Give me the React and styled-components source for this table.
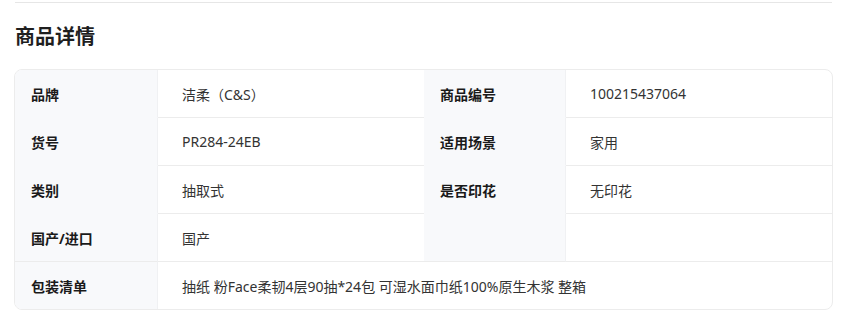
import React from 'react';
import styled, { createGlobalStyle } from 'styled-components';

const GlobalStyle = createGlobalStyle`
  body {
    margin: 0;
    background: #fff;
    font-family: "Noto Sans", "Noto Sans CJK SC", sans-serif;
  }
`;

const Page = styled.div`
  padding: 0 13px 0 15px;
  width: 817px;
`;

const Divider = styled.div`
  margin-top: 2px;
  height: 1px;
  background: #e6e6e6;
`;

const Title = styled.h2`
  margin: 20px 0 18px;
  font-size: 20px;
  line-height: 28px;
  font-weight: 700;
  color: #1f1f1f;
`;

const Table = styled.div`
  display: grid;
  grid-template-columns: 143px 266px 142px 266px;
  border: 1px solid #ececec;
  border-radius: 8px;
  overflow: hidden;
  margin-left: -1px;
  width: 817px;
`;

const Label = styled.div`
  height: 48px;
  display: flex;
  align-items: center;
  padding-left: 16px;
  box-sizing: border-box;
  background: #f8f9fb;
  border-right: 1px solid #f0f1f3;
  border-bottom: 1px solid ${(p) => (p.$edge ? '#ececec' : '#f8f9fb')};
  font-size: 14px;
  font-weight: 700;
  color: #1a1a1a;
  ${(p) => p.$last && 'border-bottom: none; height: 47px;'}
`;

const Value = styled.div`
  height: 48px;
  display: flex;
  align-items: center;
  padding-left: 24px;
  box-sizing: border-box;
  border-bottom: 1px solid #ececec;
  font-size: 14px;
  color: #333;
  grid-column: ${(p) => (p.$span ? `span ${p.$span}` : 'auto')};
  ${(p) => p.$last && 'border-bottom: none; height: 47px;'}
`;

const rows = [
  ['品牌', '洁柔（C&S）', '商品编号', '100215437064'],
  ['货号', 'PR284-24EB', '适用场景', '家用'],
  ['类别', '抽取式', '是否印花', '无印花'],
  ['国产/进口', '国产', '', ''],
];

export default function App() {
  return (
    <>
      <GlobalStyle />
      <Page>
        <Divider />
        <Title>商品详情</Title>
        <Table>
          {rows.map((r, i) => {
            const edge = i === rows.length - 1;
            return (
              <React.Fragment key={i}>
                <Label $edge={edge}>{r[0]}</Label>
                <Value>{r[1]}</Value>
                <Label $edge={edge}>{r[2]}</Label>
                <Value>{r[3]}</Value>
              </React.Fragment>
            );
          })}
          <Label $last>包装清单</Label>
          <Value $span={3} $last>
            抽纸 粉Face柔韧4层90抽*24包 可湿水面巾纸100%原生木浆 整箱
          </Value>
        </Table>
      </Page>
    </>
  );
}
